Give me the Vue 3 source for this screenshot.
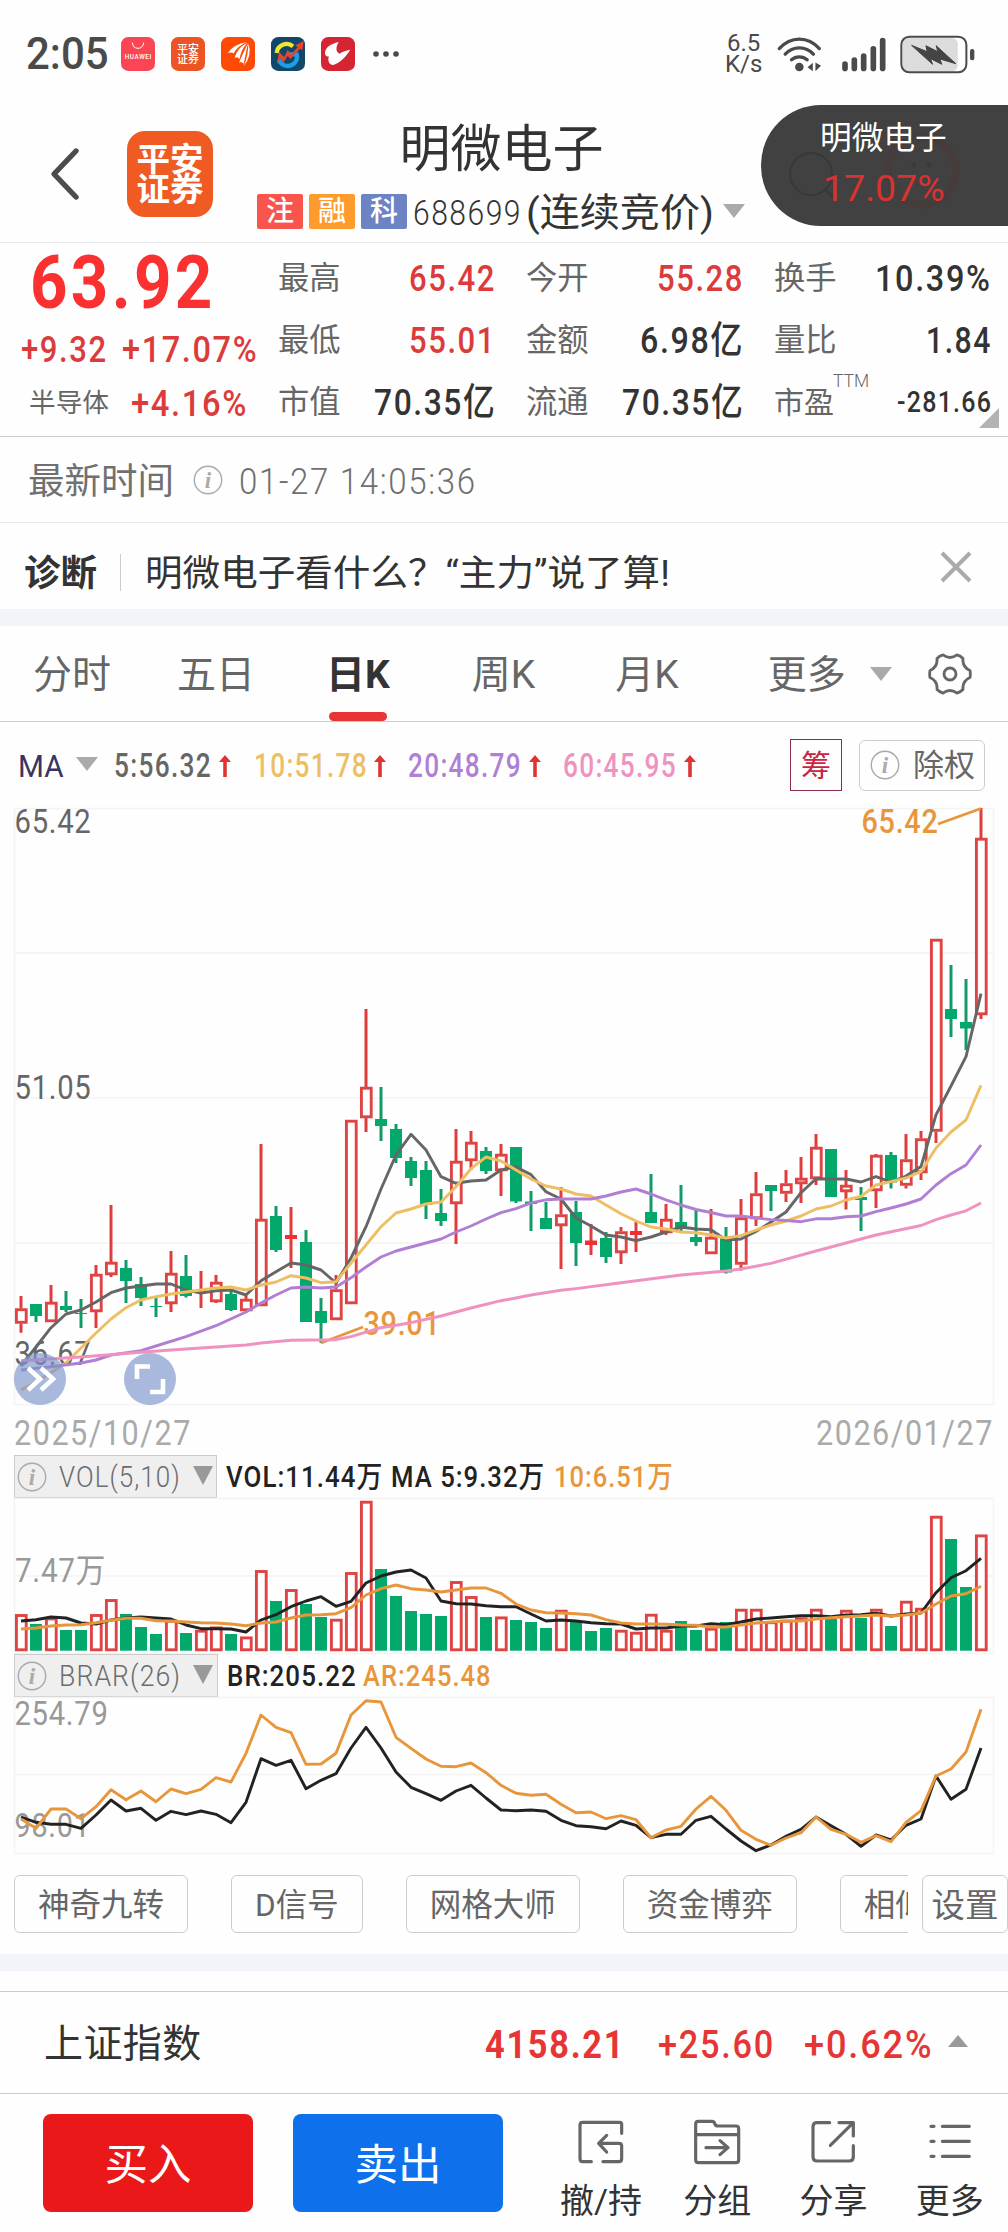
<script setup>
// Condenses a run of text horizontally so that it takes the given advance width.
const vFit = {
  mounted(el, { value }) {
    const w = el.offsetWidth
    el.style.transform = `scaleX(${value / w})`
    el.style.marginRight = `${value - w}px`
  },
}

const quotes = [
  { label: '最高', value: '65.42', w: 87, up: true },
  { label: '今开', value: '55.28', w: 87, up: true },
  { label: '换手', value: '10.39%', w: 117 },
  { label: '最低', value: '55.01', w: 87, up: true },
  { label: '金额', value: '6.98亿', w: 104 },
  { label: '量比', value: '1.84', w: 66 },
  { label: '市值', value: '70.35亿', w: 122 },
  { label: '流通', value: '70.35亿', w: 122 },
  { label: '市盈', value: '-281.66', w: 95, ttm: true },
]

const averages = [
  { text: '5:56.32', w: 98, color: '#666666' },
  { text: '10:51.78', w: 114, color: '#edbf62' },
  { text: '20:48.79', w: 114, color: '#b07fd4' },
  { text: '60:45.95', w: 114, color: '#ef92c0' },
]

const tools = ['神奇九转', 'D信号', '网格大师', '资金博弈', '相似K线']

const px = (i) => 21 + 15 * i

// [up, high, body top, body bottom, low]
const candles = [
  [1, 488, 500.5, 515.5, 524.7], [0, 496, 496, 508, 514], [1, 477, 494, 514, 514], [0, 483, 498, 502, 504],
  [0, 491, 505, 506, 520], [1, 457, 466, 504, 520], [1, 397, 454, 467, 469], [0, 452, 460, 473, 495],
  [0, 469, 476, 490, 498], [0, 488, 498, 499, 509], [1, 443, 465, 496, 504], [0, 447, 468, 488, 489.5],
  [1, 463, 482, 483, 500], [1, 467, 474, 494, 495], [0, 483, 486, 502, 503], [1, 488, 491, 503, 503],
  [1, 336, 411, 498, 498], [0, 398, 408, 442, 444], [1, 399, 427, 431, 460], [0, 422, 434, 514, 514],
  [0, 490, 503, 515, 535], [1, 467, 481.5, 512, 512], [1, 312, 312, 496, 496], [1, 201, 279, 310, 324],
  [0, 279, 311, 318, 333], [0, 316, 321, 350, 355], [0, 349, 353, 370, 378], [0, 353, 362, 397, 411],
  [0, 381, 405, 413, 418], [1, 321, 353, 396, 436], [1, 323, 334, 353, 362], [0, 339, 343, 363, 366],
  [1, 336, 346, 363, 388], [0, 339, 339, 393.5, 395], [0, 383, 393.5, 396, 423], [0, 394, 410, 421, 421],
  [1, 379, 406.5, 418, 461], [0, 393, 404, 435, 458], [1, 416, 432.5, 437, 447], [0, 424, 430, 449, 455],
  [1, 419, 423.5, 445, 456], [1, 414, 423, 427, 444], [0, 366, 404, 415, 415], [1, 396, 411, 425, 427],
  [0, 377, 414, 421, 423], [0, 401.5, 429, 434, 438], [1, 401, 429, 446, 446], [0, 419, 430.5, 464.5, 465.5],
  [1, 391, 409.5, 456.5, 462.5], [1, 364, 385.5, 411, 418], [0, 377, 377, 383, 403], [1, 362, 375.5, 385.5, 394],
  [1, 349, 370, 376, 395], [1, 326, 339, 371, 377], [0, 341, 341, 389, 389], [1, 362, 377, 384, 401.5],
  [0, 379, 389, 392, 423], [1, 346, 347, 383, 400], [0, 344, 347, 374.5, 380.5], [1, 326, 351.5, 377.5, 380.5],
  [1, 323, 330.5, 365, 372], [1, 131, 131, 323.5, 335], [0, 157, 201, 211, 229], [0, 171, 214, 220.5, 242],
  [1, 0, 30, 207, 211],
].map(([up, high, top, bottom, low], i) => ({
  up, high, top, bottom, low, x: px(i), hollow: up && bottom - top > 5,
}))

const dense = (ys) => ys.map((y, i) => `${px(i)},${y}`).join(' ')
const sparse = (pts) => pts.map(([i, y]) => `${px(i)},${y}`).join(' ')

const ma5 = dense([
  558, 539, 519.7, 506, 502, 494, 484.7, 480, 478, 476, 476, 482, 485, 482.7, 482, 487, 472.7, 463.7, 455, 457, 462, 475,
  450, 418.7, 381, 347, 326.3, 342, 368.7, 375.3, 373, 372, 362, 359, 366.6, 383.8, 391, 410, 418, 427, 429, 432.7, 429,
  424, 419, 421, 421.7, 432, 431, 423.4, 414, 404, 384.7, 370.8, 371, 371, 374, 368.7, 374, 368, 358.6, 306.8, 278, 248.7, 185.6,
])
const ma10 = dense([
  582, 573.7, 564.7, 554.7, 540, 525, 511, 499.7, 492, 488.7, 486, 484, 482, 480, 479, 482, 477, 474, 467.7, 470, 474.7,
  473.7, 455, 437, 418.7, 405, 401, 396, 394, 378.7, 360.7, 349, 353, 362, 371, 378, 381, 386, 388, 397, 405.7, 413, 419,
  421, 424, 424.7, 427, 430, 427.6, 422, 417, 413, 408, 401, 398, 392, 388.5, 377, 373.7, 370, 363.6, 340, 324, 312, 277.4,
])
const ma20 = sparse([
  [0, 562], [2, 558.7], [4, 555], [5, 552], [6, 547], [8, 542.7], [9, 538], [11, 528.7], [13, 517.7], [15, 504], [16, 495],
  [17, 487], [18, 480], [19, 479], [20, 480], [21, 479], [22, 469.7], [23, 459], [24, 449], [25, 443], [26, 439], [28, 431],
  [29, 424], [30, 418], [31, 411], [32, 404.7], [33, 400.7], [34, 394.8], [35, 391.8], [36, 391], [38, 391], [39, 388],
  [40, 384], [41, 381], [42, 386], [43, 391.8], [44, 397], [45, 401.5], [46, 404.5], [47, 408], [48, 408], [49, 410],
  [50, 411.6], [51, 412.5], [52, 413.7], [53, 410.8], [54, 410.8], [55, 408.7], [56, 408], [57, 403.6], [58, 400],
  [59, 396], [60, 391], [61, 377], [62, 365.7], [63, 357], [64, 337],
])
const ma60 = sparse([
  [0, 552.7], [4, 549], [8, 544.3], [10, 542], [15, 537], [16, 535], [18, 532.3], [21, 531.7], [22, 528.7], [24, 519.7],
  [26, 514.7], [28, 508], [30, 500], [32, 492.7], [33, 490], [34, 487], [36, 482.3], [37, 480.6], [40, 474.7], [44, 467],
  [47, 463], [48, 461], [50, 455.4], [53, 443], [56, 431], [57, 427], [60, 417.5], [61, 411.6], [62, 407], [63, 402.8], [64, 395],
])

const volumeTops = [
  116.3, 126, 119.7, 132, 132, 116.3, 101.3, 116, 129, 136, 122, 135, 132, 128.7, 136, 138.7, 72.3, 103, 91.3, 106, 119,
  121, 74.3, 3, 71, 98, 113, 116, 118, 83.3, 98.3, 119, 118.7, 122, 124, 130, 112, 124, 133, 130, 132, 134, 116, 132, 123,
  132, 130, 124, 111, 111, 123.5, 122, 119.7, 111, 121, 112, 120, 111, 128, 103, 110, 18, 41, 89, 36.7,
]
const downDays = new Set([
  1, 3, 4, 7, 8, 9, 11, 14, 17, 19, 20, 24, 25, 26, 27, 28, 31, 33, 34, 35, 37, 38, 39, 44, 45, 47, 54, 56, 58, 62, 63,
])
const volumes = volumeTops.map((top, i) => ({ x: px(i), top, up: !downDays.has(i) }))
const vol5 = dense([
  123, 121.7, 119, 120, 125, 126, 122, 120, 119, 120, 121, 127, 130.7, 130.7, 131, 134, 122, 116.7, 108.7, 103, 98.7,
  108.3, 103.3, 85, 78, 74, 72, 80, 103, 105.7, 106, 107.7, 108.7, 108.7, 116, 123, 122, 123, 124.7, 125.7, 126, 131, 130,
  130, 128, 128, 125.7, 126.7, 124, 121, 120, 118.7, 117.7, 117.7, 118.7, 117, 116.7, 115.3, 118, 116, 115, 94.7, 79.7, 72.7, 60.3,
])
const vol10 = dense([
  131, 130, 128, 127, 126.7, 124.7, 122.3, 120.3, 120.3, 122.7, 123, 124, 124.7, 125, 126, 127.7, 125, 124, 120, 117, 116.7,
  115.7, 109.7, 97, 90.7, 87, 90.7, 92, 94, 92, 90, 90, 95.3, 106, 112, 114.7, 115, 115.7, 117, 121.7, 125, 126, 126, 126.3,
  127, 127.3, 129, 129, 127, 125, 124, 123, 123, 121, 119.7, 118.7, 118, 117, 118, 117, 115, 106, 98, 95.7, 88.3,
])
const br = dense([
  120, 125.3, 127.3, 127.3, 131.3, 118, 103, 114, 111.3, 123.3, 114.3, 117.7, 114, 117.3, 125.7, 105.3, 61.7, 68.3, 63.3,
  91.7, 83.3, 76.7, 51, 30.3, 51, 75, 90.3, 96.7, 103.3, 94, 88.3, 101, 113, 113.7, 113, 114.3, 123.3, 128.7, 129.7, 131.7,
  124, 128.3, 140.7, 137.3, 137.3, 123.3, 119.3, 132, 144, 153.7, 148, 139.3, 132.3, 120, 128.7, 137.3, 149.3, 138, 143,
  128.3, 122, 79, 102.3, 92.3, 51,
])
const ar = dense([
  122, 131.3, 112, 112, 121.7, 109.7, 92.7, 102.7, 94, 104.7, 92, 96.7, 92.3, 80.7, 85, 56.3, 18, 30.3, 35.7, 67.3, 67,
  56.3, 18, 3.7, 5, 40.3, 51.3, 62, 69.3, 69.7, 66, 75.7, 88.3, 96.3, 98.3, 97.3, 107.3, 115.7, 115, 121.7, 118.7, 122.7,
  140.7, 133, 129.3, 112, 99.3, 113.3, 133.3, 142.3, 148.3, 141, 135.7, 120, 132.3, 137.3, 145.3, 138.7, 144.7, 125.3,
  113.7, 79, 72, 55, 12.3,
])

const actions = [
  { name: '撤/持', d: 'M137 49V22Q137 16 131 16H20Q12 16 12 24V126Q12 134 20 134H46M81 134H129Q137 134 137 126V87Q137 79 129 79H69M92 55L68 79L92 105' },
  { name: '分组', d: 'M19 13H60Q66 13 68 19Q70 27 78 27H132Q140 27 140 35V129Q140 137 132 137H19Q11 137 11 129V21Q11 13 19 13ZM11 53H140M42 92H108M84 71L108 92L84 113' },
  { name: '分享', d: 'M65 17H27Q15 17 15 29V120Q15 132 27 132H124Q136 132 136 120V86M93 17H136V57M67 85L136 17' },
  { name: '更多', d: 'M18 28H27M52 28H133M18 73H27M52 73H133M18 118H27M52 118H133' },
]
</script>

<template>
  <div class="page">
    <div class="status">
      <span v-fit="83" class="clock">2:05</span>
      <div class="apps">
        <svg viewBox="0 0 102 102"><rect width="102" height="102" rx="22" fill="#fb4454" /><path d="M34 17Q36 34 51 34Q66 34 68 17" fill="none" stroke="#fff" stroke-width="3" /><text x="51" y="66" text-anchor="middle" textLength="80" font-size="19" font-weight="500" fill="#fff">HUAWEI</text></svg>
        <svg viewBox="0 0 102 102"><rect width="102" height="102" rx="22" fill="#ed5425" /><g font-size="33" font-weight="500" fill="#fff" text-anchor="middle"><text x="51" y="48">平安</text><text x="51" y="79">证券</text></g></svg>
        <svg viewBox="0 0 102 102"><rect width="102" height="102" rx="22" fill="#ff4a05" /><path d="M20 49Q36 22 79 15Q49 27 38 49Q29 44 20 49ZM41 63Q48 32 79 18Q59 39 56 66Q49 58 41 63ZM54 77Q66 48 81 18Q74 52 68 80Q61 72 54 77ZM68 87Q82 58 82 18Q95 56 68 87Z" fill="#fff" /></svg>
        <svg viewBox="0 0 102 102"><rect width="102" height="102" rx="22" fill="#12466b" /><path d="M17 48A30 30 0 0 1 66 28" fill="none" stroke="#f1e532" stroke-width="13" /><path d="M24 67A27 27 0 0 0 77 52H55" fill="none" stroke="#18a0e8" stroke-width="13" /><path d="M18 82L24 45L40 60L50 38L60 52L80 31L73 25L98 12L94 40L87 35L58 66L50 56L38 76L28 64Z" fill="#e8432c" /></svg>
        <svg viewBox="0 0 102 102"><rect width="102" height="102" rx="22" fill="#d52433" /><path d="M53 15C30 20 12 32 12 48C12 56 17 60 24 58C18 72 26 84 36 84C54 80 76 58 88 38C74 41 62 44 56 50C46 46 42 34 53 15Z" fill="#fff" /></svg>
      </div>
      <svg class="dots" viewBox="0 0 28 8"><circle cx="4" cy="4" r="2.8" /><circle cx="14" cy="4" r="2.8" /><circle cx="24" cy="4" r="2.8" /></svg>
      <div class="speed"><span>6.5</span><span>K/s</span></div>
      <svg class="wifi" viewBox="820 100 140 115">
        <g fill="none" stroke="#4a4a4a" stroke-width="10" stroke-linecap="round"><path d="M830 141Q856 112 891 112Q926 112 952 141" /><path d="M848 158Q866 139 891 139Q916 139 934 158" /><path d="M867 175Q877 166 891 166Q905 166 915 175" /></g>
        <circle cx="891" cy="197" r="13" fill="#4a4a4a" /><path d="M916 198L932 184V210ZM957 193L940 183V210Z" fill="#4a4a4a" />
      </svg>
      <svg class="signal" viewBox="0 0 132 104"><g stroke="#4a4a4a" stroke-width="17" stroke-linecap="round"><path d="M9 81V94M37 69V94M65 57V94M94 35V94M122 10V94" /></g></svg>
      <svg class="battery" viewBox="1194 100 226 117">
        <rect x="1202" y="109" width="166" height="100" rx="18" fill="#dcdcdc" /><rect x="1198" y="105" width="196" height="107" rx="24" fill="none" stroke="#4a4a4a" stroke-width="6" /><rect x="1405" y="142" width="13" height="34" rx="6" fill="#4a4a4a" />
        <path d="M1229 131L1276 150L1272 132L1308 150L1303 132L1362 186L1314 172L1320 188L1286 171L1292 188Z" fill="#444" stroke="#444" stroke-width="3" stroke-linejoin="round" />
      </svg>
    </div>

    <header class="header">
      <svg class="back" viewBox="0 0 30 54"><path d="M26 4L4 27L26 50" fill="none" stroke="#4c4c4c" stroke-width="5.4" stroke-linecap="round" stroke-linejoin="round" /></svg>
      <div class="logo"><span>平安</span><span>证券</span></div>
      <div class="heading">
        <div class="title">明微电子</div>
        <div class="subtitle">
          <b class="tag red">注</b><b class="tag amber">融</b><b class="tag blue">科</b>
          <span v-fit="109" class="code">688699</span>
          <span v-fit="188" class="phase">(连续竞价)</span>
          <i class="tri down"></i>
        </div>
      </div>
      <div class="pill">
        <svg class="ghost" viewBox="0 0 247 121"><circle cx="50" cy="69" r="21" fill="none" stroke="#383838" stroke-width="2" /><path d="M64 84L74 94" stroke="#383838" stroke-width="3" /><circle cx="161" cy="66" r="34" fill="none" stroke="#463c3c" stroke-width="7" /><circle cx="153" cy="60" r="2.5" fill="#3a3a3a" /><circle cx="168" cy="60" r="2.5" fill="#3a3a3a" /></svg>
        <span class="pill-name">明微电子</span>
        <span class="pill-rate">17.07%</span>
      </div>
    </header>

    <section class="quote">
      <div class="main">
        <div class="price"><span v-fit="186">63.92</span></div>
        <div class="change"><span v-fit="87">+9.32</span><span v-fit="136">+17.07%</span></div>
        <div class="sector"><em>半导体</em><span v-fit="117">+4.16%</span></div>
      </div>
      <div class="grid">
        <div v-for="q in quotes" :key="q.label" class="cell" :class="{ ttm: q.ttm }">
          <span class="label">{{ q.label }}</span><sup v-if="q.ttm">TTM</sup>
          <span v-fit="q.w" class="value" :class="{ up: q.up }">{{ q.value }}</span>
        </div>
      </div>
      <i class="corner"></i>
    </section>

    <section class="time">
      <span class="time-label">最新时间</span>
      <svg class="info" viewBox="0 0 30 30"><circle cx="15" cy="15" r="13.7" /><text x="15" y="23">i</text></svg>
      <span v-fit="238" class="stamp">01-27 14:05:36</span>
    </section>

    <section class="diagnosis">
      <b>诊断</b><i></i>
      <span v-fit="525">明微电子看什么？“主力”说了算!</span>
      <svg viewBox="0 0 32 32"><path d="M2 2L30 30M30 2L2 30" stroke="#aaa" stroke-width="4" /></svg>
    </section>
    <div class="band"></div>

    <nav class="tabs">
      <span class="tab">分时</span><span class="tab">五日</span><span class="tab active">日K</span><span class="tab">周K</span><span class="tab">月K</span><span class="tab more">更多</span>
      <i class="tri down"></i>
      <svg viewBox="-66 -66 132 132"><path d="M60 -10.6Q62 0 60 10.6Q36.4 21 39 46.7Q32 54 20.9 57.3Q0 42 -20.9 57.3Q-32 54 -39 46.7Q-36.4 21 -60 10.6Q-62 0 -60 -10.6Q-36.4 -21 -39 -46.7Q-32 -54 -20.9 -57.3Q0 -42 20.9 -57.3Q32 -54 39 -46.7Q36.4 -21 60 -10.6Z" /><circle r="18" /></svg>
    </nav>

    <section class="averages">
      <span v-fit="46" class="ma">MA</span><i class="tri down"></i>
      <div v-for="a in averages" :key="a.text" class="avg" :style="{ color: a.color }">
        <span v-fit="a.w">{{ a.text }}</span>
        <svg viewBox="0 0 14 24"><path d="M5.2 23V8H1L7 1L13 8H8.8V23Z" fill="#e03434" /></svg>
      </div>
      <span class="chip-box">筹</span>
      <span class="adjust"><svg class="info" viewBox="0 0 30 30"><circle cx="15" cy="15" r="13.7" /><text x="15" y="23">i</text></svg>除权</span>
    </section>

    <svg class="chart" width="1008" height="597" viewBox="0 0 1008 597">
      <g class="gridlines"><rect x="14.5" y="0.5" width="979" height="596" /><path d="M14 145H994M14 290H994M14 435H994" /></g>
      <g class="axis" font-size="33.5">
        <text x="14.5" y="25" textLength="77" lengthAdjust="spacingAndGlyphs">65.42</text><text x="14.5" y="291" textLength="77" lengthAdjust="spacingAndGlyphs">51.05</text><text x="14.5" y="557" textLength="77" lengthAdjust="spacingAndGlyphs">36.67</text>
      </g>
      <g v-for="c in candles" :key="c.x" :class="c.up ? 'rise' : 'fall'">
        <template v-if="c.hollow">
          <path :d="`M${c.x} ${c.high}V${c.top}M${c.x} ${c.bottom}V${c.low}`" />
          <rect :x="c.x - 4.6" :y="c.top + 1.2" width="9.8" :height="c.bottom - c.top - 2.4" class="hollow" />
        </template>
        <template v-else>
          <path :d="`M${c.x} ${c.high}V${c.low}`" />
          <rect :x="c.x - 6" :y="c.top" width="12" :height="c.bottom - c.top" class="solid" />
        </template>
      </g>
      <g class="peak" font-size="33.5">
        <path d="M938 16L981 0.5M321 535L363 519" />
        <text x="861.5" y="25" textLength="77" lengthAdjust="spacingAndGlyphs">65.42</text><text x="363.5" y="527" textLength="77" lengthAdjust="spacingAndGlyphs">39.01</text>
      </g>
      <g class="lines"><polyline :points="ma5" stroke="#666" /><polyline :points="ma10" stroke="#edbf62" /><polyline :points="ma20" stroke="#b07fd4" /><polyline :points="ma60" stroke="#ef92c0" /></g>
      <g class="round"><circle cx="40" cy="571" r="26" /><path d="M28 560L40 571L28 582M41 560L53 571L41 582" /></g>
      <g class="round"><circle cx="150" cy="571" r="26" /><path d="M137 571V558.5H150M163 571V584H150" /></g>
    </svg>
    <div class="dates"><span v-fit="178">2025/10/27</span><span v-fit="178">2026/01/27</span></div>

    <div class="indicator">
      <div class="picker"><svg class="info" viewBox="0 0 30 30"><circle cx="15" cy="15" r="13.7" /><text x="15" y="23">i</text></svg><span v-fit="122">VOL(5,10)</span><i class="tri"></i></div>
      <span v-fit="157">VOL:11.44万</span><span v-fit="154">MA 5:9.32万</span><span v-fit="120" class="orange">10:6.51万</span>
    </div>
    <svg class="chart" width="1008" height="156" viewBox="0 0 1008 156">
      <g class="gridlines"><rect x="14.5" y="0.5" width="979" height="155" /><path d="M14 78H994" /></g>
      <g class="axis pale" font-size="33"><text x="15" y="84" textLength="91" lengthAdjust="spacingAndGlyphs">7.47万</text></g>
      <g v-for="v in volumes" :key="v.x" :class="v.up ? 'rise' : 'fall'">
        <rect v-if="v.up" :x="v.x - 4.6" :y="v.top + 1.2" width="9.8" :height="150.6 - v.top" class="hollow" />
        <rect v-else :x="v.x - 6" :y="v.top" width="12" :height="152.7 - v.top" class="solid" />
      </g>
      <g class="lines"><polyline :points="vol5" stroke="#222" /><polyline :points="vol10" stroke="#e8963c" /></g>
    </svg>

    <div class="indicator">
      <div class="picker wide"><svg class="info" viewBox="0 0 30 30"><circle cx="15" cy="15" r="13.7" /><text x="15" y="23">i</text></svg><span v-fit="122">BRAR(26)</span><i class="tri"></i></div>
      <span v-fit="130">BR:205.22</span><span v-fit="129" class="orange tight">AR:245.48</span>
    </div>
    <svg class="chart" width="1008" height="157" viewBox="0 0 1008 157">
      <g class="gridlines"><rect x="14.5" y="0.5" width="979" height="156" /><path d="M14 77.5H994" /></g>
      <g class="axis pale" font-size="33"><text x="14.5" y="28" textLength="94" lengthAdjust="spacingAndGlyphs">254.79</text><text x="14.5" y="140" textLength="76" lengthAdjust="spacingAndGlyphs">98.01</text></g>
      <g class="lines"><polyline :points="br" stroke="#222" /><polyline :points="ar" stroke="#e8963c" /></g>
    </svg>

    <div class="tools">
      <div class="scroller"><span v-for="t in tools" :key="t" class="chip">{{ t }}</span></div>
      <span class="chip settings">设置</span>
    </div>
    <div class="band"></div>

    <section class="index">
      <span class="index-name">上证指数</span>
      <b v-fit="140">4158.21</b><span v-fit="117">+25.60</span><span v-fit="129">+0.62%</span>
      <i class="tri upward"></i>
    </section>

    <footer class="footer">
      <button class="buy">买入</button><button class="sell">卖出</button>
      <div class="actions">
        <div v-for="a in actions" :key="a.name" class="action">
          <svg viewBox="0 0 150 150"><path :d="a.d" /></svg><span>{{ a.name }}</span>
        </div>
      </div>
    </footer>
  </div>
</template>

<style>
html, body { margin: 0; background: #fff; }
</style>

<style scoped>
.page { width: 1008px; height: 2232px; overflow: hidden; background: #fefefe; color: #333; font-family: Roboto, "Noto Sans CJK SC", sans-serif; white-space: nowrap; }
.page * { box-sizing: border-box; }
span, b, i, em, svg { flex: none; }
i, em { font-style: normal; }
span { display: inline-block; transform-origin: 0 50%; }
svg { display: block; }
.tri { width: 0; height: 0; border: solid transparent; border-width: 14px 11px 0; border-top-color: #aaa; }
.info { width: 30px; height: 30px; letter-spacing: 0; }
.info circle { fill: none; stroke: #aaa; stroke-width: 1.4; }
.info text { font: italic bold 23px "Liberation Serif", serif; fill: #aaa; text-anchor: middle; }

.status { height: 105px; display: flex; align-items: center; padding: 3px 31px 0 26px; }
.clock { font-size: 45px; font-weight: 500; line-height: 50px; color: #4a4a4a; }
.apps { display: flex; gap: 16px; margin-left: 12px; }
.apps svg { width: 34px; height: 34px; }
.dots { width: 28px; height: 8px; margin-left: 17px; fill: #4a4a4a; }
.speed { display: flex; flex-direction: column; align-items: center; width: 36px; margin-left: 326px; font-size: 24px; line-height: 21px; color: #4a4a4a; }
.wifi { width: 46px; height: 38px; margin-left: 14px; }
.signal { width: 44px; height: 35px; margin-left: 20px; }
.battery { width: 75px; height: 39px; margin-left: 14px; }

.header { position: relative; display: flex; height: 138px; border-bottom: 1px solid #e8e8e8; }
.back { width: 30px; height: 54px; margin: 42px 0 0 50px; }
.logo { display: flex; flex-direction: column; width: 86px; height: 86px; margin: 26px 0 0 47px; padding-top: 14px; border-radius: 18px; background: #f05a23; color: #fff; font-size: 33.5px; font-weight: 700; line-height: 30px; text-align: center; }
.heading { width: 489px; margin-left: 44px; }
.title { height: 84px; padding-top: 3px; font-size: 51px; line-height: 84px; text-align: center; }
.subtitle { display: flex; align-items: center; height: 44px; }
.tag { width: 46px; height: 35px; margin-right: 6px; border-radius: 2px; color: #fff; font-size: 28px; font-weight: 500; line-height: 35px; text-align: center; }
.red { background: #fa554d; }
.amber { background: #ff9b2c; }
.blue { background: #6c83c4; }
.code { font-size: 35px; font-weight: 300; line-height: 44px; padding-top: 5px; letter-spacing: 0.05em; }
.phase { margin-left: 4px; font-size: 39px; line-height: 44px; padding-top: 3px; }
.subtitle .tri { margin-left: 9px; }
.pill { position: absolute; right: 0; top: 0; display: flex; flex-direction: column; width: 247px; height: 121px; border-radius: 60px 0 0 60px; background: #414141; overflow: hidden; }
.ghost { position: absolute; inset: 0; }
.pill-name { position: relative; margin: 13px 0 0 59px; color: #fff; font-size: 31.7px; line-height: 42px; }
.pill-rate { position: relative; margin: 5px 0 0 62px; color: #d93232; font-size: 37.5px; line-height: 46px; }

.quote { position: relative; display: flex; height: 194px; border-bottom: 1px solid #ccc; }
.main { width: 278px; }
.price { height: 78px; padding-left: 30px; color: #fb3030; font-size: 75px; font-weight: 700; line-height: 78px; letter-spacing: 0.05em; }
.change, .sector { display: flex; gap: 14px; height: 54px; padding: 1px 0 0 21px; color: #dc3b3b; font-size: 37.5px; font-weight: 500; line-height: 54px; letter-spacing: 0.05em; }
.sector { padding-left: 29px; gap: 22px; }
.sector em { color: #666; font-size: 26.7px; font-weight: 400; letter-spacing: 0; }
.grid { display: grid; grid-template-columns: repeat(3, 218px); column-gap: 30px; grid-auto-rows: 62px; padding-top: 4px; }
.cell { display: flex; justify-content: space-between; line-height: 62px; }
.label { color: #666; font-size: 31.3px; padding-top: 1px; }
.cell sup { position: relative; top: -21px; margin: 0 auto 0 -1px; color: #666; font-size: 17.5px; font-weight: 300; }
.value { font-size: 37.5px; font-weight: 500; letter-spacing: 0.05em; }
.value.up { color: #dc3b3b; }
.ttm .label { font-size: 30px; }
.ttm .value { font-size: 30px; }
.corner { position: absolute; right: 9px; bottom: 8px; border: solid transparent; border-width: 0 0 20px 20px; border-bottom-color: #b3b3b3; }

.time { display: flex; align-items: center; height: 86px; border-bottom: 1px solid #e8e8e8; color: #707070; }
.time-label { margin: 4px 19px 0 28px; font-size: 36.5px; line-height: 60px; }
.stamp { margin-left: 16px; font-size: 36.5px; font-weight: 300; line-height: 60px; padding-top: 4px; letter-spacing: 0.05em; }
.diagnosis { display: flex; align-items: center; height: 86px; padding-top: 13px; }
.diagnosis b { margin-left: 24px; font-size: 36.5px; line-height: 60px; padding-top: 3px; }
.diagnosis i { width: 1px; height: 37px; margin: 0 24px 0 23px; background: #ccc; }
.diagnosis span { font-size: 36.5px; line-height: 60px; padding-top: 3px; }
.diagnosis svg { width: 32px; height: 32px; margin: -12px 36px 0 auto; }
.band { height: 17px; background: #f3f4f9; }

.tabs { display: flex; align-items: center; height: 96px; padding-left: 33px; border-bottom: 1px solid #ccc; color: #666; font-size: 39px; }
.tab { line-height: 95px; margin-right: 66px; padding-top: 2px; height: 95px; }
.tab:nth-child(2) { margin-right: 71px; }
.tab.active { position: relative; margin-right: 82px; color: #333; font-weight: 700; }
.tab:nth-child(4) { margin-right: 80px; }
.tab:nth-child(5) { margin-right: 89px; }
.active::after { content: ""; position: absolute; left: 3px; bottom: 0; width: 58px; height: 9px; border-radius: 5px; background: #e93434; }
.tab.more { margin-right: 24px; }
.tabs svg { width: 44px; height: 44px; margin-left: 36px; fill: none; stroke: #666; stroke-width: 8.5; stroke-linejoin: round; }

.averages { display: flex; align-items: center; height: 86px; padding-left: 18px; font-size: 34px; font-weight: 500; }
.ma { color: #3a3560; font-weight: 400; font-size: 31px; padding-top: 3px; }
.averages .tri { margin: -2px 16px 0 12px; }
.avg { display: flex; align-items: center; gap: 6px; margin-right: 21px; letter-spacing: 0.05em; }
.avg svg { width: 14px; height: 24px; margin-top: 1px; }
.avg:nth-of-type(1) { margin-right: 22px; }
.chip-box { width: 52px; height: 52px; margin-left: auto; border: 1px solid #8c3048; color: #cc2341; font-size: 30px; font-weight: 400; line-height: 50px; padding-top: 1px; text-align: center; }
.adjust { display: flex; align-items: center; gap: 13px; width: 126px; height: 51px; margin: 0 23px 0 17px; padding-left: 10px; border: 1px solid #ccc; border-radius: 6px; color: #666; font-size: 31px; font-weight: 400; line-height: 49px; }

.chart { overflow: visible; letter-spacing: 0.05em; }
.gridlines { fill: none; stroke: #f4f4f4; stroke-width: 1.5; }
.axis { fill: #666; }
.pale { fill: #999; }
.rise path, .fall path { stroke-width: 3; fill: none; }
.rise path { stroke: #e03c3c; }
.rise .hollow { fill: #fff; stroke: #df4444; stroke-width: 2.9; }
.rise .solid { fill: #f03030; }
.fall path { stroke: #129a68; }
.fall .solid { fill: #03a86b; }
.peak path { stroke: #e8963c; stroke-width: 2.8; }
.peak text { fill: #e8963c; font-weight: 500; }
.lines { fill: none; stroke-width: 2.9; stroke-linejoin: round; }
.round circle { fill: #7d93cc; fill-opacity: 0.66; }
.round path { fill: none; stroke: #fff; stroke-width: 4.6; }

.dates { display: flex; justify-content: space-between; height: 50px; padding: 3px 14px 0; color: #aaa; font-size: 34.5px; line-height: 50px; letter-spacing: 0.05em; }
.indicator { display: flex; align-items: center; height: 43px; padding-left: 14px; color: #222; font-size: 29.5px; font-weight: 500; line-height: 43px; letter-spacing: 0.04em; }
.indicator > span { margin-left: 8px; padding-top: 1px; }
.indicator > .picker + span { margin-left: 9px; }
.indicator > .tight { margin-left: 6px; }
.picker { display: flex; align-items: center; width: 203px; height: 43px; padding-left: 2px; border: 1px solid #ccc; background: #efefef; color: #6c6c6c; font-size: 29px; font-weight: 300; line-height: 41px; }
.picker span { margin-left: 12px; padding-top: 2px; }
.picker .tri { margin: -2px 0 0 12px; border-width: 19px 10px 0; border-top-color: #999; }
.wide { width: 204px; }
.orange { color: #e8963c; }

.tools { display: flex; justify-content: space-between; align-items: center; height: 100px; padding-left: 14px; }
.scroller { display: flex; gap: 43px; width: 894px; overflow: hidden; }
.chip { height: 58px; padding: 0 23px; border: 1px solid #ccc; border-radius: 6px; color: #666; font-size: 31.5px; line-height: 59px; }
.settings { width: 86px; padding: 0; text-align: center; font-size: 33.5px; }
.index { display: flex; align-items: center; height: 103px; margin-top: 20px; border: solid #ccc; border-width: 1px 0; color: #e63535; font-size: 39px; font-weight: 500; line-height: 60px; letter-spacing: 0.05em; }
.index-name { width: 441px; margin-left: 44px; padding-top: 2px; color: #333; font-weight: 400; letter-spacing: 0.01em; }
.index b { display: inline-block; transform-origin: 0 50%; padding-top: 4px; }
.index b + span { margin-left: 33px; padding-top: 4px; }
.index span + span { margin-left: 29px; padding-top: 4px; }
.index .tri { border-width: 0 10px 12px; border-bottom-color: #999; margin: -3px 0 0 15px; }

.footer { display: flex; height: 138px; padding: 20px 0 0 43px; }
button { width: 210px; height: 98px; margin-right: 40px; padding: 6px 0 0; border: 0; border-radius: 8px; color: #fff; font: 43.5px/1 Roboto, "Noto Sans CJK SC", sans-serif; }
.buy { background: #ea1818; }
.sell { background: #0e70ea; }
.actions { display: flex; margin-top: 3px; }
.action { display: flex; flex-direction: column; align-items: center; width: 116.2px; font-size: 34px; line-height: 60px; }
.action svg { width: 50px; height: 50px; fill: none; stroke: #666; stroke-width: 9.5; stroke-linecap: round; stroke-linejoin: round; }
.action span { padding-top: 4px; }
</style>
